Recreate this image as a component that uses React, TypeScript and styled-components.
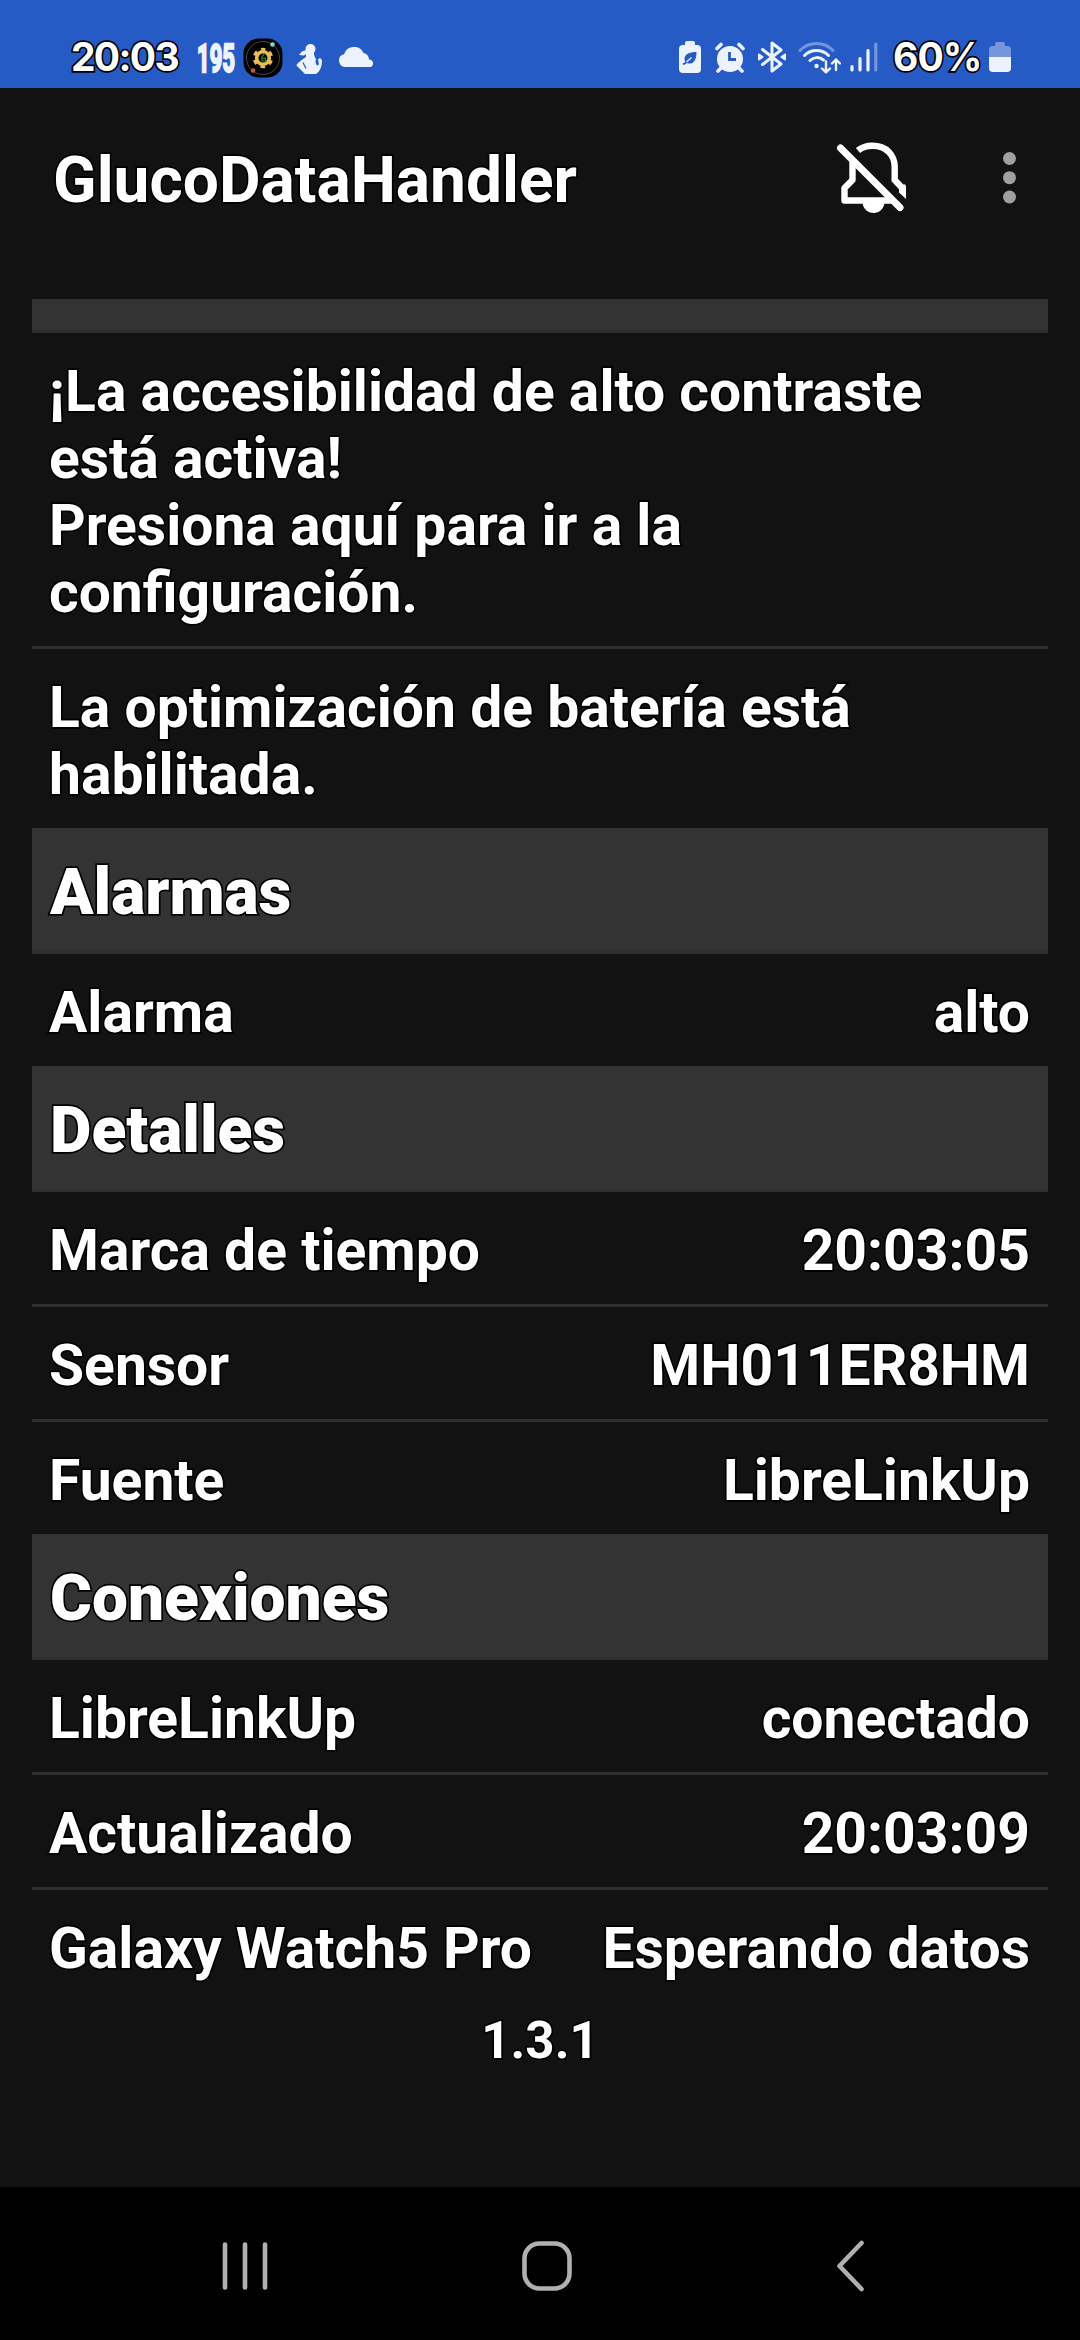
import React from 'react';
import styled, { createGlobalStyle, css } from 'styled-components';

const GlobalStyle = createGlobalStyle`
  * { box-sizing: border-box; }
  body { margin: 0; background: #121212; }
`;

const outlined = css`
  color: #fff;
  -webkit-text-stroke: 3.4px #000;
  paint-order: stroke fill;
`;

const Screen = styled.div`
  width: 1080px;
  height: 2340px;
  display: flex;
  flex-direction: column;
  background: #121212;
  font-family: Roboto, 'Liberation Sans', sans-serif;
  overflow: hidden;
`;

const StatusBar = styled.header`
  height: 88px;
  padding: 26px 69px 0 71px;
  background: #265bc5;
  display: flex;
  justify-content: space-between;
`;

const StatusGroup = styled.div`
  display: flex;
  align-items: center;
  height: 62px;
`;

const StatusText = styled.span<{ $width: number; $spacing?: number }>`
  ${outlined}
  width: ${p => p.$width}px;
  font-family: Inter, Roboto, sans-serif;
  font-size: 39px;
  font-weight: 700;
  line-height: 62px;
  letter-spacing: ${p => p.$spacing ?? 0}px;
  white-space: nowrap;
`;

const Glucose = styled.span`
  width: 40px;
  padding-top: 4px;
  color: #edf2ff;
  -webkit-text-stroke: 2.4px #edf2ff;
  font-size: 38px;
  font-weight: 700;
  line-height: 62px;
  transform: scaleX(0.58);
  transform-origin: left;
`;

const Glyph = styled.svg<{ $gap?: number; $drop?: number }>`
  display: block;
  flex: none;
  margin-left: ${p => p.$gap ?? 0}px;
  margin-top: ${p => p.$drop ?? 0}px;
`;

const AppBar = styled.div`
  height: 211px;
  padding: 43px 64px 0 53px;
  display: flex;
  align-items: flex-start;
`;

const AppTitle = styled.h1`
  ${outlined}
  flex: 1;
  margin: 12px 0 0;
  font-size: 64px;
  line-height: 75px;
  font-weight: 700;
`;

const Content = styled.main`
  flex: 1;
  padding: 0 32px;
`;

const Band = styled.h2<{ $height: number }>`
  ${outlined}
  margin: 0;
  height: ${p => p.$height}px;
  padding: 27px 18px 0;
  background: #333;
  border-bottom: 3px solid #2f2f2f;
  font-size: 64px;
  line-height: 75px;
  font-weight: 900;
`;

const Row = styled.div<{ $divided?: boolean }>`
  ${outlined}
  display: flex;
  justify-content: space-between;
  padding: 25px 18px 20px 17px;
  border-bottom: ${p => (p.$divided ? '3px solid #2f2f2f' : 'none')};
  font-size: 57px;
  line-height: 67px;
  font-weight: 700;
  white-space: pre-line;
`;

const Version = styled.p`
  ${outlined}
  margin: 9px 0 0;
  text-align: center;
  font-size: 51px;
  line-height: 60px;
  font-weight: 700;
`;

const NavBar = styled.nav`
  height: 153px;
  padding: 5px 0 0 220px;
  background: #000;
  display: flex;
  align-items: center;
`;

type Item = { label: string; value?: string };

const Rows = ({ items }: { items: Item[] }) => (
  <>
    {items.map((item, i) => (
      <Row key={item.label} $divided={i < items.length - 1}>
        <span>{item.label}</span>
        {item.value && <span>{item.value}</span>}
      </Row>
    ))}
  </>
);

const notices: Item[] = [
  { label: '¡La accesibilidad de alto contraste\nestá activa!\nPresiona aquí para ir a la\nconfiguración.' },
  { label: 'La optimización de batería está\nhabilitada.' },
];
const details: Item[] = [
  { label: 'Marca de tiempo', value: '20:03:05' },
  { label: 'Sensor', value: 'MH011ER8HM' },
  { label: 'Fuente', value: 'LibreLinkUp' },
];
const connections: Item[] = [
  { label: 'LibreLinkUp', value: 'conectado' },
  { label: 'Actualizado', value: '20:03:09' },
  { label: 'Galaxy Watch5 Pro', value: 'Esperando datos' },
];

const ICON = '#edf2ff';
const DIM = '#7595dd';

const GearBadge = () => (
  <Glyph $gap={6} $drop={2} width="40" height="40" viewBox="0 0 40 40">
    <rect x="0.5" y="0.5" width="39" height="39" rx="15" fill="#000" />
    <circle cx="20" cy="20" r="16.5" fill="none" stroke="#555b5c" strokeWidth="0.8" />
    <circle cx="20" cy="20" r="6.3" fill="none" stroke="#e9bd55" strokeWidth="3.6" />
    <circle cx="20" cy="20" r="8.4" fill="none" stroke="#e9bd55" strokeWidth="3.6" strokeDasharray="4.4 4.4" strokeDashoffset="2.2" transform="rotate(-90 20 20)" />
    <path d="M22 15l-3 4v4h4l-1-3-4 1" fill="none" stroke="#278b2c" strokeWidth="1.2" />
    <circle cx="29.500" cy="6.500" r="2.300" fill="#7fdcdc" />
    <circle cx="10" cy="32.500" r="2.300" fill="#c9524d" />
  </Glyph>
);

const Swimmer = () => (
  <Glyph $gap={13} $drop={3} width="28" height="32" viewBox="0 0 28 32" fill={ICON}>
    <circle cx="14.500" cy="6" r="5" />
    <path d="M10 7L6 8.500 3 12 8 12.500 12 9z" />
    <path d="M9.500 9.500H18c0 2 0 4 2 6.500-1 3 0 6.500 2 6.500 1.500-1 .5-4 0-6l2-1.500 2 2C26 23 24.500 28 20 31H9L.5 22.500C.3 21 5 17.500 10 14z" />
    <path d="M7 19.500l3 6" stroke="#265bc5" strokeWidth="1.200" />
  </Glyph>
);

const Cloud = () => (
  <Glyph $gap={14} width="37" height="20" viewBox="0 0 37 20" fill={ICON}>
    <path d="M7 20a6.500 6.500 0 0 1-1-12.800A10.500 10.500 0 0 1 25.500 6 7 7 0 0 1 31 12.500 4 4 0 0 1 33 20z" />
  </Glyph>
);

const SaverBattery = () => (
  <Glyph width="22" height="32" viewBox="0 0 22 32">
    <path d="M6 4V2a2 2 0 0 1 2-2h6a2 2 0 0 1 2 2v2h2a4 4 0 0 1 4 4v20a4 4 0 0 1-4 4H4a4 4 0 0 1-4-4V8a4 4 0 0 1 4-4z" fill={ICON} />
    <path d="M17.500 11C10 11 5.500 13.500 5.500 18c0 1 .3 2 .8 3L3 23l2 1 3-2c5 2 9.500-1 9.500-11z" fill="#265bc5" />
    <path d="M7.500 21l5-4.500" stroke={ICON} strokeWidth="1.200" />
  </Glyph>
);

const Alarm = () => (
  <Glyph $gap={14} width="30" height="31" viewBox="0 0 30 31">
    <circle cx="15" cy="17" r="13" fill={ICON} />
    <path d="M2 6.500L6 2.500M28 6.500L24 2.500M6 26l-3 3M24 26l3 3" stroke={ICON} strokeWidth="3.600" strokeLinecap="round" />
    <path d="M14.500 10v7.500H21" fill="none" stroke="#265bc5" strokeWidth="2.800" />
  </Glyph>
);

const Bluetooth = () => (
  <Glyph $gap={12} width="30" height="32" viewBox="0 0 30 32" fill="none" stroke={ICON} strokeWidth="3" strokeLinecap="round" strokeLinejoin="round">
    <path d="M5.500 8.500L24 23 15 30V2l9 7L5.500 23.500" />
    <path d="M2 13.500l3.500 2.500L2 18.500zM28 13.500L24.500 16l3.500 2.500z" fill={ICON} strokeWidth="2" />
  </Glyph>
);

const Wifi = () => (
  <Glyph $gap={11} width="43" height="33" viewBox="0 0 43 33" fill="none" strokeLinecap="round" strokeWidth="3">
    <path d="M2 9.500a23 23 0 0 1 33 0" stroke={DIM} />
    <path d="M6.500 14.500a17 17 0 0 1 24 0M12 19.500a10 10 0 0 1 13.500-.5" stroke={ICON} />
    <circle cx="18.500" cy="25" r="2.200" fill={ICON} />
    <path d="M28 20.500V31M24 27.500l4 3.800 4-3.800M38 29V18.500M34 22.500l4-4 4 4" stroke={ICON} strokeWidth="2.400" strokeLinejoin="round" />
  </Glyph>
);

const Signal = () => (
  <Glyph $gap={9} width="28" height="30" viewBox="0 0 28 30" strokeLinecap="round" strokeWidth="3.200">
    <path d="M2 24.500v3.500M10 16.500V28M18 8.500V28" stroke={ICON} />
    <path d="M25.800 2v26" stroke={DIM} />
  </Glyph>
);

const Battery = () => (
  <Glyph width="22" height="30" viewBox="0 0 22 30">
    <path d="M6 4V2a2 2 0 0 1 2-2h6a2 2 0 0 1 2 2v2h2a4 4 0 0 1 4 4v8H0V8a4 4 0 0 1 4-4z" fill={DIM} />
    <path d="M0 15h22v11a4 4 0 0 1-4 4H4a4 4 0 0 1-4-4z" fill={ICON} />
  </Glyph>
);

const BellOff = () => (
  <Glyph $drop={9} width="70" height="74" viewBox="0 0 70 74" fill="none" stroke="#fff" strokeWidth="6.400">
    <path d="M22 10.500C26 7 31 5.700 36.500 5.700c14 0 22.200 9.500 22.200 21V40l8 8.500" />
    <path d="M62 47.500l2-2 5-1.200 1 2V59l-7-6.500v-4z" fill="#fff" stroke="none" />
    <path d="M16.500 20v20l-8 8v12.500h48" strokeLinejoin="round" />
    <path d="M4.500 8l59.500 59.500" strokeLinecap="round" strokeWidth="7" />
    <path d="M26.500 62h22a11 11 0 0 1-22 0z" fill="#fff" stroke="none" />
  </Glyph>
);

const MoreDots = () => (
  <Glyph $gap={97} $drop={21} width="13" height="52" viewBox="0 0 13 52" fill="#a0a0a0">
    <circle cx="6.500" cy="6.500" r="6.500" />
    <circle cx="6.500" cy="25.700" r="6.500" />
    <circle cx="6.500" cy="45" r="6.500" />
  </Glyph>
);

export default function App() {
  return (
    <Screen>
      <GlobalStyle />
      <StatusBar>
        <StatusGroup>
          <StatusText $width={126} $spacing={-1.7}>20:03</StatusText>
          <Glucose>195</Glucose>
          <GearBadge />
          <Swimmer />
          <Cloud />
        </StatusGroup>
        <StatusGroup>
          <SaverBattery />
          <Alarm />
          <Bluetooth />
          <Wifi />
          <Signal />
          <Glyph width="15" height="1" />
          <StatusText $width={96} $spacing={-0.9}>60%</StatusText>
          <Battery />
        </StatusGroup>
      </StatusBar>
      <AppBar>
        <AppTitle>GlucoDataHandler</AppTitle>
        <BellOff />
        <MoreDots />
      </AppBar>
      <Content>
        <Band $height={34} />
        <Rows items={notices} />
        <Band $height={126}>Alarmas</Band>
        <Rows items={[{ label: 'Alarma', value: 'alto' }]} />
        <Band $height={126}>Detalles</Band>
        <Rows items={details} />
        <Band $height={126}>Conexiones</Band>
        <Rows items={connections} />
        <Version>1.3.1</Version>
      </Content>
      <NavBar>
        <Glyph width="50" height="50" viewBox="0 0 50 50" stroke="#b0b0b0" strokeWidth="4.600" strokeLinecap="round">
          <path d="M5 3.500v43M25 3.500v43M45 3.500v43" />
        </Glyph>
        <Glyph $gap={252} width="50" height="50" viewBox="0 0 50 50" fill="none" stroke="#b0b0b0" strokeWidth="4.600">
          <rect x="2.500" y="2.500" width="45" height="45" rx="15" />
        </Glyph>
        <Glyph $gap={264} width="30" height="52" viewBox="0 0 30 52" fill="none" stroke="#b0b0b0" strokeWidth="4.600" strokeLinecap="round" strokeLinejoin="round">
          <path d="M25.500 3L3.500 26l22 23" />
        </Glyph>
      </NavBar>
    </Screen>
  );
}
